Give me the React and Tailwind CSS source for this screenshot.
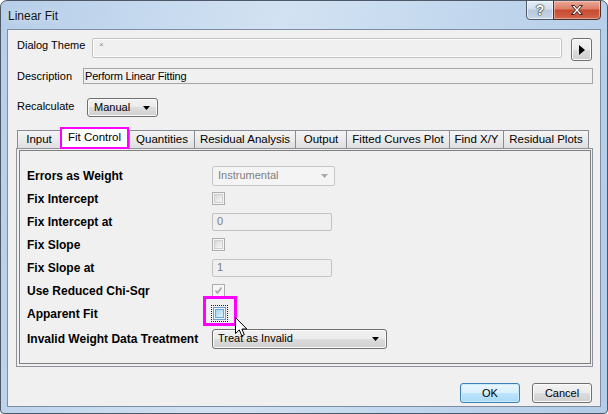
import React from 'react';

const btnFace =
  'border border-[#707070] rounded-[3px] bg-[linear-gradient(180deg,#f2f2f2_0%,#ebebeb_50%,#dddddd_50%,#cfcfcf_100%)] shadow-[inset_0_0_0_1px_#fbfbfb]';

const Arrow = ({ color = '#000' }) => (
  <svg width="7" height="4" viewBox="0 0 7 4">
    <path d="M0 0h7L3.5 4z" fill={color} />
  </svg>
);

const tabs = [
  { name: 'Input', w: 'w-[43px]' },
  { name: 'Fit Control', w: 'w-[69px]', active: true },
  { name: 'Quantities', w: 'w-[65px]' },
  { name: 'Residual Analysis', w: 'w-[101px]' },
  { name: 'Output', w: 'w-[51px]' },
  { name: 'Fitted Curves Plot', w: 'w-[103px]' },
  { name: 'Find X/Y', w: 'w-[54px]' },
  { name: 'Residual Plots', w: 'w-[86px]', last: true },
];

const CheckBox = ({ checked }) => (
  <div className="flex h-[13px] w-[13px] items-center justify-center border border-[#adadad] bg-[#f6f6f6]">
    {checked ? (
      <svg width="9" height="9" viewBox="0 0 9 9">
        <path d="M1.5 4.5l2 2.5L7.5 1.5" fill="none" stroke="#a3a3a3" strokeWidth="1.6" />
      </svg>
    ) : (
      <div className="h-[9px] w-[9px] border border-[#cfcfcf] bg-[linear-gradient(135deg,#d9d9d9,#f7f7f7)]" />
    )}
  </div>
);

const DisabledInput = ({ value }) => (
  <div className="flex h-[18px] w-[120px] items-center rounded-[2px] border border-[#c3c3c3] bg-[#f0f0f0] pl-[4px] text-[11px] text-[#7a7a7a]">
    {value}
  </div>
);

const Label = ({ children }) => (
  <div className="w-[185px] shrink-0 text-[12px] font-bold leading-[14px]">{children}</div>
);

const Cursor = () => (
  <svg className="absolute left-[23px] top-[12px]" width="13" height="20" viewBox="0 0 13 20">
    <path
      d="M0.5 0.5V16.5L4.3 12.9L6.8 18.8L9.3 17.7L6.9 12H11.8Z"
      fill="#fff"
      stroke="#000"
      strokeWidth="1"
      strokeLinejoin="miter"
    />
  </svg>
);

const App = () => {
  return (
    <div className="h-[414px] w-[608px] select-none bg-white font-['Liberation_Sans',Arial,sans-serif] text-black">
      <div className="flex h-full flex-col overflow-hidden rounded-t-[7px] rounded-b-[4px] border border-[#4d5968] bg-[linear-gradient(100deg,#b6cee8_0%,#c4d8ee_20%,#d3e2f2_42%,#c9dcf0_58%,#bcd3eb_78%,#b3cce7_100%)]">
        {/* title bar */}
        <div className="flex h-[28px] shrink-0 items-start justify-between pl-[7px] pr-[6px]">
          <span className="mt-[8px] text-[12px] leading-[14px] text-[#141414] [text-shadow:0_0_6px_#eaf2fa]">
            Linear Fit
          </span>
          <div className="-mt-px flex h-[20px]">
            <div className="flex w-[28px] items-center justify-center rounded-bl-[4px] border border-[#4d5968] bg-[linear-gradient(180deg,#e4edf6_0%,#d2dfec_45%,#b7c9dc_50%,#c6d6e6_100%)] shadow-[inset_0_0_0_1px_rgba(255,255,255,0.6)]">
              <span className="text-[14px] font-bold leading-none text-white [text-shadow:0_0_1px_#222,0_0_1px_#222,0_0_2px_#333]">
                ?
              </span>
            </div>
            <div className="-ml-px flex w-[48px] items-center justify-center rounded-br-[4px] border border-[#4d2f2a] bg-[linear-gradient(180deg,#eaa898_0%,#dd7c66_45%,#c74a30_50%,#d2654b_100%)] shadow-[inset_0_0_0_1px_rgba(255,220,210,0.5)]">
              <svg width="14" height="12" viewBox="0 0 14 12">
                <path
                  d="M1.5 1.5h3l2.5 3 2.5-3h3l-4 4.5 4 4.5h-3l-2.5-3-2.5 3h-3l4-4.5z"
                  fill="#fff"
                  stroke="#3a2420"
                  strokeWidth="1"
                  strokeLinejoin="round"
                />
              </svg>
            </div>
          </div>
        </div>

        {/* client area */}
        <div className="mx-[6px] mb-[6px] flex flex-1 flex-col border border-[#7d8ea4] bg-[#f0f0f0] pl-[8px] pr-[7px] pt-[8px]">
          {/* dialog theme */}
          <div className="flex h-[23px] items-start">
            <div className="ml-px w-[75px] text-[11px] leading-[14px]">Dialog Theme</div>
            <div className="h-[20px] w-[470px] rounded-[2px] border border-[#c4c4c4] bg-[#f0f0f0] shadow-[inset_0_0_0_1px_#fdfdfd]">
              <span className="ml-[6px] block text-[8px] leading-[12px] text-[#8a8a8a]">×</span>
            </div>
            <div className={`ml-[9px] flex h-[23px] w-[21px] items-center justify-center ${btnFace}`}>
              <svg width="6" height="10" viewBox="0 0 6 10">
                <path d="M0 0L6 5L0 10z" fill="#000" />
              </svg>
            </div>
          </div>

          {/* description */}
          <div className="mt-[7px] flex h-[16px] items-start">
            <div className="ml-px mt-px w-[66px] text-[11px] leading-[14px]">Description</div>
            <div className="flex h-[16px] flex-1 items-center border border-[#a5a5a5] bg-[#f0f0f0] pl-[1px] text-[11px] tracking-[-0.2px]">
              Perform Linear Fitting
            </div>
          </div>

          {/* recalculate */}
          <div className="mt-[14px] flex h-[19px] items-start">
            <div className="ml-px mt-px w-[70px] text-[11px] leading-[14px]">Recalculate</div>
            <div className={`flex h-[19px] w-[71px] items-center justify-between pl-[6px] pr-[7px] text-[11px] ${btnFace}`}>
              <span>Manual</span>
              <Arrow />
            </div>
          </div>

          {/* tabs */}
          <div className="ml-px mt-[10px] flex h-[21px] items-end">
            {tabs.map((t) =>
              t.active ? (
                <div
                  key={t.name}
                  className={`relative z-10 -mb-px flex h-[22px] items-center justify-center border-2 border-[#ff00ff] bg-white text-[11.5px] ${t.w}`}
                >
                  {t.name}
                </div>
              ) : (
                <div
                  key={t.name}
                  className={`flex h-[18px] items-center justify-center border-t border-[#898c95] bg-[linear-gradient(180deg,#f4f4f4_0%,#ebebeb_50%,#dedede_100%)] pt-px text-[11.5px] ${t.w} ${
                    t.last ? 'border-r' : 'border-l'
                  } ${t.name === 'Input' ? 'border-l' : ''} ${t.name === 'Residual Plots' ? 'border-l' : ''}`}
                >
                  {t.name}
                </div>
              )
            )}
          </div>

          {/* tab page */}
          <div className="h-[219px] border border-[#8f9299] bg-[#f0f0f0] pb-[2px] pl-[2px] pr-px pt-px">
            <div className="relative flex h-[214px] flex-col border border-[#7e7e7e] pl-[7px] pt-[13px]">
              <div className="flex h-[23px] items-center">
                <Label>Errors as Weight</Label>
                <div className="flex h-[20px] w-[123px] items-center justify-between rounded-[2px] border border-[#c7c7c7] bg-[#f4f4f4] pl-[5px] pr-[6px] text-[11px] text-[#808080]">
                  <span>Instrumental</span>
                  <Arrow color="#a8a8a8" />
                </div>
              </div>
              <div className="flex h-[23px] items-center">
                <Label>Fix Intercept</Label>
                <CheckBox />
              </div>
              <div className="flex h-[23px] items-center">
                <Label>Fix Intercept at</Label>
                <DisabledInput value="0" />
              </div>
              <div className="flex h-[23px] items-center">
                <Label>Fix Slope</Label>
                <CheckBox />
              </div>
              <div className="flex h-[23px] items-center">
                <Label>Fix Slope at</Label>
                <DisabledInput value="1" />
              </div>
              <div className="flex h-[23px] items-center">
                <Label>Use Reduced Chi-Sqr</Label>
                <CheckBox checked />
              </div>
              <div className="flex h-[23px] items-center">
                <Label>Apparent Fit</Label>
                <div className="relative">
                  <div className="-ml-[1px] flex h-[17px] w-[17px] items-center justify-center border border-dotted border-[#222]">
                    <div className="flex h-[13px] w-[13px] items-center justify-center border border-[#6f9ccc] bg-[#eaf5fd]">
                      <div className="h-[9px] w-[9px] border border-[#63a9dc] bg-[linear-gradient(135deg,#9fd2f4,#e3f3fd)]" />
                    </div>
                  </div>
                  <div className="absolute -left-[9px] -top-[9px] h-[30px] w-[34px] border-[3px] border-[#ff00ff]" />
                  <Cursor />
                </div>
              </div>
              <div className="mt-[2px] flex h-[23px] items-center">
                <Label>Invalid Weight Data Treatment</Label>
                <div className={`flex h-[20px] w-[175px] items-center justify-between pl-[5px] pr-[7px] text-[11px] ${btnFace}`}>
                  <span>Treat as Invalid</span>
                  <Arrow />
                </div>
              </div>
            </div>
          </div>

          {/* footer buttons */}
          <div className="mr-px mt-[16px] flex justify-end gap-[12px]">
            <div className="flex h-[20px] w-[60px] items-center justify-center rounded-[3px] border border-[#3c7fb1] bg-[linear-gradient(180deg,#eaf6fd_0%,#d9f0fc_50%,#bee6fd_50%,#a7d9f5_100%)] text-[11px] shadow-[inset_0_0_0_1px_#c8ecfc]">
              OK
            </div>
            <div className={`flex h-[20px] w-[60px] items-center justify-center text-[11px] ${btnFace}`}>Cancel</div>
          </div>
        </div>
      </div>
    </div>
  );
};

export default App;
